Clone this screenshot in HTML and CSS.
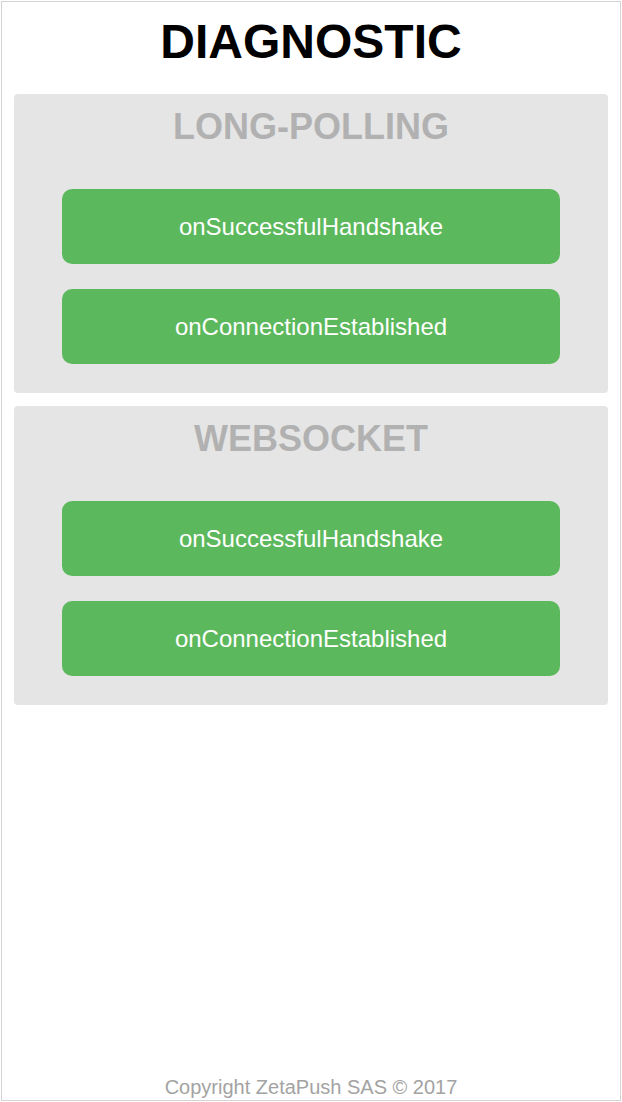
FILE: index.html
```html
<!DOCTYPE html>
<html>
<head>
<meta charset="utf-8">
<title>Diagnostic</title>
<link rel="stylesheet" href="styles.css">
</head>
<body>
<div class="page">
  <h1 class="title">DIAGNOSTIC</h1>
  <section class="panel">
    <h2 class="panel-title">LONG-POLLING</h2>
    <div class="actions">
      <button class="btn">onSuccessfulHandshake</button>
      <button class="btn">onConnectionEstablished</button>
    </div>
  </section>
  <section class="panel">
    <h2 class="panel-title">WEBSOCKET</h2>
    <div class="actions">
      <button class="btn">onSuccessfulHandshake</button>
      <button class="btn">onConnectionEstablished</button>
    </div>
  </section>
  <footer class="footer">Copyright ZetaPush SAS © 2017</footer>
</div>
</body>
</html>
```
FILE: styles.css
```css
* { box-sizing: border-box; }
html, body { margin: 0; padding: 0; background: #fff; }
body { padding: 1px; font-family: "Liberation Sans", Arial, sans-serif; }
.page {
  width: 620px;
  height: 1100px;
  border: 1px solid #d3d3d3;
  display: flex;
  flex-direction: column;
  padding: 0 12px;
}
.title {
  margin: 12px 0 24px;
  font-size: 48px;
  line-height: 56px;
  font-weight: bold;
  text-align: center;
  color: #000;
}
.panel {
  background: #e5e5e5;
  border-radius: 4px;
  padding: 12px 48px 29px;
  margin-bottom: 13px;
}
.panel-title {
  margin: 0 0 41px;
  font-size: 36px;
  line-height: 42px;
  font-weight: bold;
  text-align: center;
  color: #b2b1b2;
}
.actions {
  display: flex;
  flex-direction: column;
  gap: 25px;
}
.btn {
  display: block;
  width: 100%;
  height: 75px;
  border: none;
  border-radius: 10px;
  background: #5cb85c;
  color: #fff;
  font-family: "Liberation Sans", Arial, sans-serif;
  font-size: 24px;
  padding: 0;
  cursor: pointer;
}
.footer {
  margin-top: auto;
  text-align: center;
  font-size: 20px;
  line-height: 23px;
  color: #a3a3a3;
  padding-bottom: 1px;
}
```
